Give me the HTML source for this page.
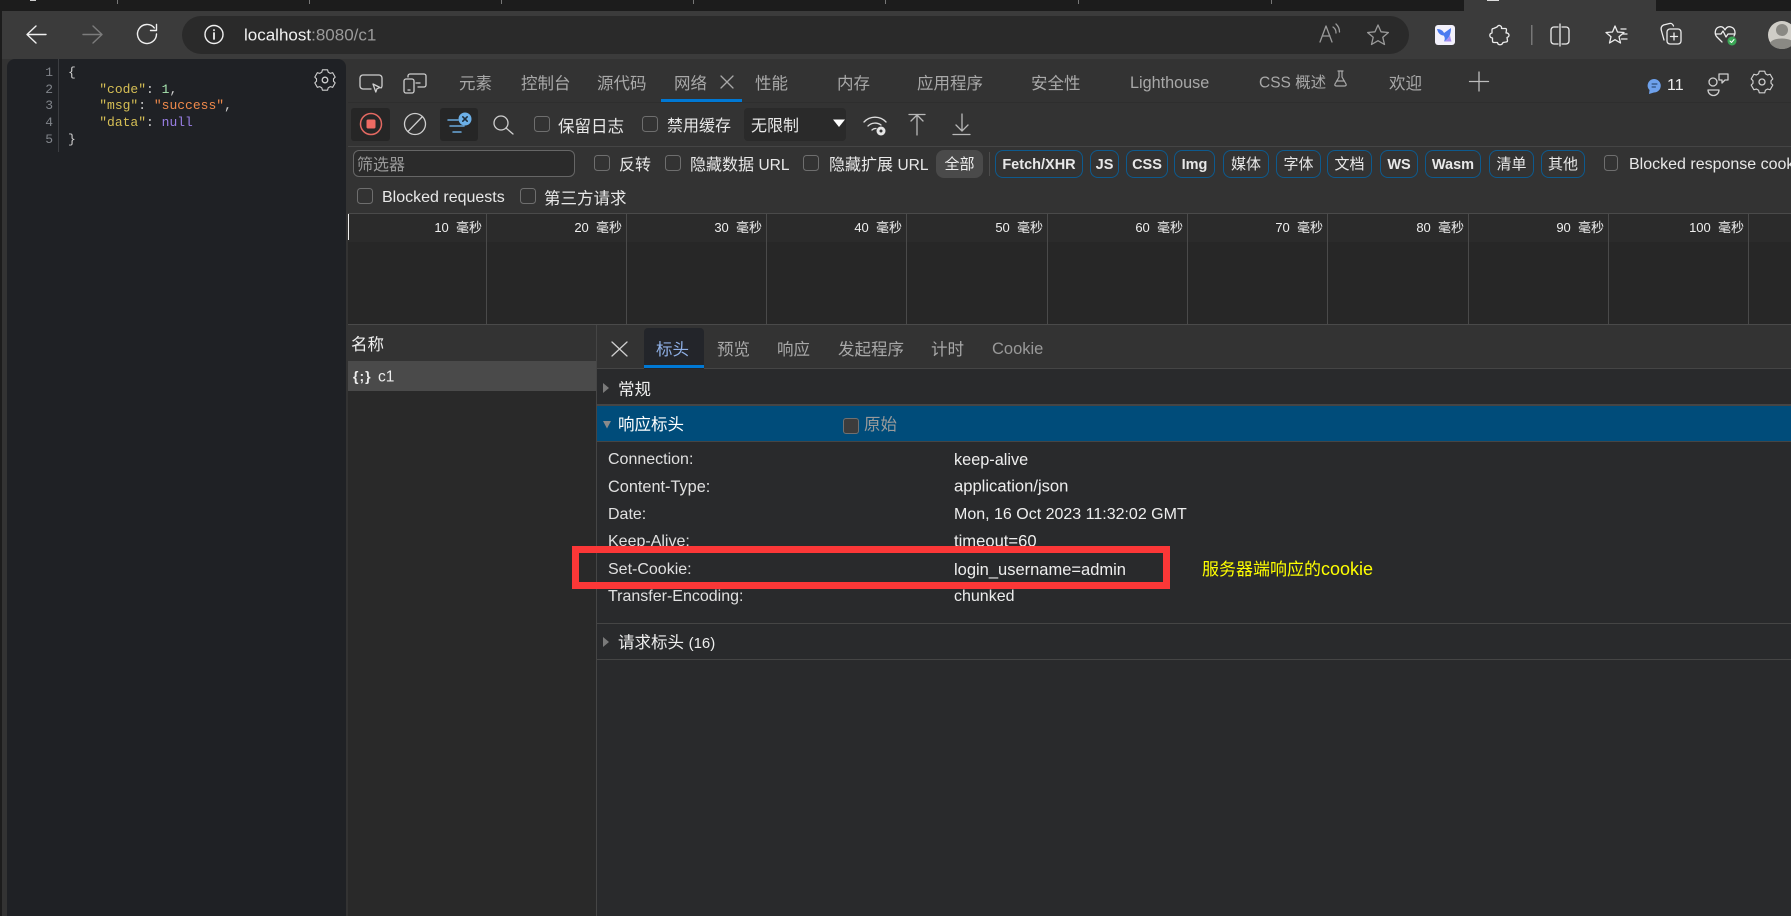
<!DOCTYPE html>
<html><head><meta charset="utf-8"><title>localhost:8080/c1</title>
<style>
html,body{margin:0;padding:0;width:1791px;height:916px;overflow:hidden;background:#3b3b3b}
body{position:relative;font-family:"Liberation Sans","Noto Sans CJK SC",sans-serif;font-size:15px;color:#e6e6e6}
.b{position:absolute}
.t{position:absolute;white-space:nowrap;transform:translateY(-50%);line-height:1}
.g{color:#a8a8a8;font-size:16.5px}
.w{color:#e8e8e8;font-size:16px}
.cb{position:absolute;width:13.5px;height:13.5px;border:1.5px solid #6e6e6e;border-radius:3.5px;background:#333;box-sizing:content-box}
.chip{position:absolute;top:150px;height:26px;border:1.5px solid #0d5a8e;border-radius:8px;text-align:center;line-height:28px;font-size:14.5px;font-weight:bold;color:#e8e8e8}
.cn{font-weight:normal;font-size:15px}
.tm{position:absolute;top:222px;width:90px;text-align:right;font-size:13px;line-height:14px;color:#eee;white-space:pre;transform:translateY(-1px)}
.v{position:absolute;width:1px;top:214px;height:110px;background:#4a4a4a}
.m{position:absolute;font-family:"Liberation Mono",monospace;font-size:13px;line-height:16.7px;white-space:pre}
.h{position:absolute;white-space:nowrap;transform:translateY(-50%);line-height:1;font-size:16px;color:#e0e0e0}
</style></head><body>
<!-- tab strip -->
<div class="b" style="left:0;top:0;width:1791px;height:11px;background:#1c1c1c"></div>
<div class="b" style="left:1464px;top:0;width:192px;height:11px;background:#3b3b3b"></div>
<div class="b" style="left:1456px;top:0;width:8px;height:11px;background:#1c1c1c;border-radius:0 0 8px 0"></div>
<div class="b" style="left:1487px;top:0;width:12px;height:1px;background:#ddd"></div>
<div class="b" style="left:117px;top:0;width:1px;height:4px;background:#777"></div>
<div class="b" style="left:309px;top:0;width:1px;height:4px;background:#777"></div>
<div class="b" style="left:501px;top:0;width:1px;height:4px;background:#777"></div>
<div class="b" style="left:693px;top:0;width:1px;height:4px;background:#777"></div>
<div class="b" style="left:885px;top:0;width:1px;height:4px;background:#777"></div>
<div class="b" style="left:1078px;top:0;width:1px;height:4px;background:#777"></div>
<div class="b" style="left:1271px;top:0;width:1px;height:4px;background:#777"></div>
<div class="b" style="left:30px;top:0;width:6px;height:1px;background:#ccc"></div>
<!-- address bar -->
<div class="b" style="left:182px;top:16px;width:1227px;height:38px;border-radius:19px;background:#2a2a2a"></div>
<span class="t" style="left:244px;top:35px;font-size:17px;color:#f0f0f0">localhost<span style="color:#9a9a9a">:8080/c1</span></span>
<!-- left panel -->
<div class="b" style="left:0;top:59px;width:348px;height:857px;background:#333"></div>
<div class="b" style="left:0;top:0;width:2px;height:916px;background:#1c1c1c"></div>
<div class="b" style="left:7px;top:59px;width:339px;height:857px;background:#1f2125;border-radius:8px 8px 0 0"></div>
<div class="b" style="left:58px;top:59px;width:1px;height:93px;background:#3c3e42"></div>
<div class="m" style="left:38px;top:65px;width:15px;text-align:right;color:#80848a">1
2
3
4
5</div>
<div class="m" style="left:68px;top:65px;color:#cfcfcf">{
    <span style="color:#d6bf55">"code"</span>: <span style="color:#a8e6b0">1</span>,
    <span style="color:#d6bf55">"msg"</span>: <span style="color:#f08a4b">"success"</span>,
    <span style="color:#d6bf55">"data"</span>: <span style="color:#9a7fe6">null</span>
}</div>
<!-- devtools -->
<div class="b" style="left:348px;top:59px;width:1443px;height:857px;background:#333"></div>
<div class="b" style="left:348px;top:102px;width:1443px;height:1px;background:#2e2e2e"></div>
<div class="b" style="left:661px;top:99px;width:81px;height:3px;background:#0078d4"></div>
<span class="t g" style="left:459px;top:84px">元素</span>
<span class="t g" style="left:521px;top:84px">控制台</span>
<span class="t g" style="left:597px;top:84px">源代码</span>
<span class="t g" style="left:674px;top:84px">网络</span>
<span class="t g" style="left:755px;top:84px">性能</span>
<span class="t g" style="left:837px;top:84px">内存</span>
<span class="t g" style="left:917px;top:84px">应用程序</span>
<span class="t g" style="left:1031px;top:84px">安全性</span>
<span class="t g" style="left:1130px;top:83px;font-size:16.2px">Lighthouse</span>
<span class="t g" style="left:1259px;top:83px;font-size:15.5px">CSS 概述</span>
<span class="t g" style="left:1389px;top:84px">欢迎</span>
<span class="t" style="left:1667px;top:86px;font-size:16px;color:#eee">11</span>
<!-- toolbar 2 -->
<div class="b" style="left:351px;top:108px;width:39px;height:33px;background:#262626;border-radius:3px"></div>
<div class="b" style="left:440px;top:108px;width:38px;height:33px;background:#262626;border-radius:3px"></div>
<div class="cb" style="left:534px;top:116px"></div>
<span class="t w" style="left:558px;top:127px;font-size:16.5px">保留日志</span>
<div class="cb" style="left:642px;top:116px"></div>
<span class="t w" style="left:667px;top:127px">禁用缓存</span>
<div class="b" style="left:744px;top:108px;width:102px;height:33px;background:#2a2a2a;border-radius:4px"></div>
<span class="t w" style="left:751px;top:127px">无限制</span>
<div class="b" style="left:348px;top:146px;width:1443px;height:1px;background:#454545"></div>
<!-- filter row -->
<div class="b" style="left:353px;top:150px;width:220px;height:25px;border:1px solid #666;border-radius:6px;background:#2b2b2b"></div>
<span class="t" style="left:357px;top:166px;font-size:16px;color:#999">筛选器</span>
<div class="cb" style="left:594px;top:155px"></div>
<span class="t w" style="left:619px;top:166px">反转</span>
<div class="cb" style="left:665px;top:155px"></div>
<span class="t w" style="left:690px;top:166px">隐藏数据 <span style="font-size:15.500px">URL</span></span>
<div class="cb" style="left:803px;top:155px"></div>
<span class="t w" style="left:829px;top:166px">隐藏扩展 <span style="font-size:15.500px">URL</span></span>
<div class="b" style="left:936px;top:150px;width:47px;height:28px;background:#4a4a4a;border-radius:8px;text-align:center;line-height:30px;font-size:15px;color:#eee">全部</div>
<div class="b" style="left:989px;top:152px;width:1px;height:24px;background:#4c4c4c"></div>
<div class="chip" style="left:995px;width:86px">Fetch/XHR</div>
<div class="chip" style="left:1090px;width:27px">JS</div>
<div class="chip" style="left:1126px;width:40px">CSS</div>
<div class="chip" style="left:1174px;width:39px">Img</div>
<div class="chip cn" style="left:1223px;width:44px">媒体</div>
<div class="chip cn" style="left:1276px;width:43px">字体</div>
<div class="chip cn" style="left:1327px;width:43px">文档</div>
<div class="chip" style="left:1380px;width:36px">WS</div>
<div class="chip" style="left:1425px;width:54px">Wasm</div>
<div class="chip cn" style="left:1489px;width:43px">清单</div>
<div class="chip cn" style="left:1541px;width:42px">其他</div>
<div class="cb" style="left:1604px;top:155px;width:12px"></div>
<span class="t w" style="left:1629px;top:165px">Blocked response cookies</span>
<div class="cb" style="left:357px;top:188px"></div>
<span class="t w" style="left:382px;top:198px">Blocked requests</span>
<div class="cb" style="left:520px;top:188px"></div>
<span class="t w" style="left:544px;top:199px;font-size:16.500px">第三方请求</span>
<!-- overview -->
<div class="b" style="left:348px;top:213px;width:1443px;height:111px;background:#272727"></div>
<div class="b" style="left:348px;top:214px;width:1443px;height:28px;background:#2b2b2b"></div>
<div class="b" style="left:348px;top:213px;width:1443px;height:1px;background:#4a4a4a"></div>
<div class="b" style="left:348px;top:214px;width:1px;height:26px;background:#eee"></div>
<div class="v" style="left:486px"></div><div class="v" style="left:626px"></div><div class="v" style="left:766px"></div><div class="v" style="left:906px"></div><div class="v" style="left:1047px"></div><div class="v" style="left:1187px"></div><div class="v" style="left:1327px"></div><div class="v" style="left:1468px"></div><div class="v" style="left:1608px"></div><div class="v" style="left:1748px"></div>
<div class="tm" style="left:392px">10  毫秒</div><div class="tm" style="left:532px">20  毫秒</div><div class="tm" style="left:672px">30  毫秒</div><div class="tm" style="left:812px">40  毫秒</div><div class="tm" style="left:953px">50  毫秒</div><div class="tm" style="left:1093px">60  毫秒</div><div class="tm" style="left:1233px">70  毫秒</div><div class="tm" style="left:1374px">80  毫秒</div><div class="tm" style="left:1514px">90  毫秒</div><div class="tm" style="left:1654px">100  毫秒</div>
<div class="b" style="left:348px;top:324px;width:1443px;height:1px;background:#4a4a4a"></div>
<!-- name column -->
<div class="b" style="left:348px;top:325px;width:248px;height:591px;background:#292929"></div>
<div class="b" style="left:348px;top:325px;width:248px;height:36px;background:#333"></div>
<div class="b" style="left:348px;top:361px;width:248px;height:30px;background:#4a4a4a"></div>
<div class="b" style="left:596px;top:325px;width:1px;height:591px;background:#454545"></div>
<span class="t" style="left:351px;top:345px;font-size:16.5px;color:#eee">名称</span>
<span class="t" style="left:353px;top:376px;font-size:14px;font-weight:bold;color:#eee;letter-spacing:1px">{;}</span>
<span class="t" style="left:378px;top:377px;font-size:15.500px;color:#eee">c1</span>
<!-- details -->
<div class="b" style="left:597px;top:325px;width:1194px;height:591px;background:#292a2c"></div>
<div class="b" style="left:597px;top:325px;width:1194px;height:44px;background:#333"></div>
<div class="b" style="left:597px;top:368px;width:1194px;height:1px;background:#454545"></div>
<div class="b" style="left:644px;top:328px;width:60px;height:41px;background:#23252a;border-radius:4px 4px 0 0"></div>
<div class="b" style="left:644px;top:365px;width:60px;height:3px;background:#0078d4"></div>
<span class="t" style="left:656px;top:350px;font-size:16.5px;color:#8fb0e6">标头</span>
<span class="t g" style="left:717px;top:350px">预览</span>
<span class="t g" style="left:777px;top:350px">响应</span>
<span class="t g" style="left:838px;top:350px">发起程序</span>
<span class="t g" style="left:931px;top:350px">计时</span>
<span class="t g" style="left:992px;top:349px;font-size:16.5px;color:#999">Cookie</span>
<span class="t" style="left:618px;top:390px;font-size:16.5px;color:#eee">常规</span>
<div class="b" style="left:597px;top:404px;width:1194px;height:2px;background:#454545"></div>
<div class="b" style="left:597px;top:406px;width:1194px;height:35px;background:#004c7a"></div>
<span class="t" style="left:618px;top:425px;font-size:16.5px;color:#fff">响应标头</span>
<div class="b" style="left:843px;top:418px;width:14px;height:14px;background:#3c3c3c;border:1.5px solid #707070;border-radius:3px"></div>
<span class="t" style="left:864px;top:425px;font-size:16.5px;color:#9a9a9a">原始</span>
<div class="b" style="left:597px;top:441px;width:1194px;height:1px;background:#454545"></div>
<span class="h" style="left:608px;top:460px">Connection:</span><span class="h" style="left:954px;top:460px;color:#eee;font-size:16.3px">keep-alive</span>
<span class="h" style="left:608px;top:487px;font-size:16.3px">Content-Type:</span><span class="h" style="left:954px;top:487px;color:#eee;font-size:16.6px">application/json</span>
<span class="h" style="left:608px;top:515px">Date:</span><span class="h" style="left:954px;top:515px;color:#eee">Mon, 16 Oct 2023 11:32:02 GMT</span>
<span class="h" style="left:608px;top:542px">Keep-Alive:</span><span class="h" style="left:954px;top:542px;color:#eee;font-size:16.6px">timeout=60</span>
<span class="h" style="left:608px;top:570px">Set-Cookie:</span><span class="h" style="left:954px;top:570px;color:#eee;font-size:16.5px">login_username=admin</span>
<span class="h" style="left:608px;top:597px">Transfer-Encoding:</span><span class="h" style="left:954px;top:597px;color:#eee">chunked</span>
<div class="b" style="left:597px;top:623px;width:1194px;height:1px;background:#454545"></div>
<span class="t" style="left:618px;top:643px;font-size:16.5px;color:#eee">请求标头 <span style="font-size:15px">(16)</span></span>
<div class="b" style="left:597px;top:659px;width:1194px;height:1px;background:#454545"></div>
<!-- annotation -->
<div class="b" style="left:572px;top:546px;width:598px;height:43px;box-sizing:border-box;border:7px solid #fb3737"></div>
<span class="t" style="left:1202px;top:569px;font-size:17px;color:#ffff00">服务器端响应的<span style="font-size:18px">cookie</span></span>
<!-- icons -->
<svg class="b" style="left:0;top:0" width="1791" height="916" viewBox="0 0 1791 916" fill="none" stroke-linecap="round" stroke-linejoin="round">
<defs><path id="gear" d="M-3-12h6l.8 2.8 2.4 1.4 2.8-.8 3 5.2-2 2v2.800l2 2-3 5.200-2.800-.8-2.400 1.400-.8 2.800h-6l-.8-2.800-2.400-1.400-2.800.8-3-5.200 2-2v-2.800l-2-2 3-5.200 2.800.8 2.400-1.400z"/></defs>
<!-- nav -->
<g stroke="#f0f0f0" stroke-width="1.400">
<path d="M28 34.500H46M36 26l-9 8.500 9 8.500"/>
<path d="M83 34.500H101M93 26l9 8.500-9 8.500" stroke="#7c7c7c"/>
<path d="M156.500 34a9.500 9.500 0 1 1-2.200-6.100"/><path d="M156.500 24.500v6h-6"/>
<circle cx="214" cy="34.500" r="9"/><path d="M214 33v6M214 30v.3" stroke-width="1.800"/>
</g>
<!-- read aloud, star -->
<g stroke="#9a9a9a" stroke-width="1.300">
<path d="M1320 42l6-16 6 16M1322.500 36h7.500M1333 27a7 7 0 0 1 3 6M1336 24a11 11 0 0 1 3.500 8"/>
<path d="M1378 25l3 6.800 7.400.7-5.600 4.800 1.700 7.200-6.500-3.800-6.500 3.800 1.700-7.200-5.600-4.800 7.400-.7z"/>
</g>
<!-- app -->
<rect x="1435" y="25" width="20" height="20" rx="3" fill="#f3f1fb"/>
<path d="M1437 29c3.500 0 6 1.500 7 4l7-5c0 6-2 11-7 13.500 1.500-3 .5-5-.5-6-3 0-5.500-2.500-6.500-6.500z" fill="#4b7bf0"/>
<path d="M1444 41.500c2.500-1 5-3.500 6-6.500 .5 3 1 5 1.500 6.500z" fill="#a68cf0"/>
<g stroke="#ececec" stroke-width="1.300">
<path d="M1497 27c2-3 5-1 4.500 1.500h4c1 0 1 1 1 1.500l-.5 3c3-.5 4.500 3.500 1 4.500l.5 3c0 1-.5 1.500-1.500 1.500l-3 .5c-1 3-5 3-5.500 0h-3.500c-1 0-1.500-.5-1.500-1.500v-3c-3.500-.5-3.500-4.500-.5-5v-3c0-1 .5-1.500 1.500-1.500z"/>
<path d="M1558 27h-4a3 3 0 0 0-3 3v11a3 3 0 0 0 3 3h4M1562 27h4a3 3 0 0 1 3 3v11a3 3 0 0 1-3 3h-4M1560 24v22"/>
<path d="M1615 26l2.500 6 6.500.500-5 4.200 1.500 6.300-5.500-3.300-5.500 3.300 1.500-6.300-5-4.200 6.500-.5zM1621 29h5M1623 34h4M1621.500 39h5.500"/>
<path d="M1664 40l-2.500-9c-1-3 0-5 2-6l6-1.500c2-.5 3.500 1 4 2.500"/><rect x="1667" y="29" width="14" height="15" rx="3"/><path d="M1674 33v7M1670.500 36.500h7"/>
<path d="M1722 42l-5-5c-3-3-2-9 2-10 3-1 5 1 6 3 1-2 3-4 6-3 4 1 5 6 3 9M1716 34h5l2-3 3 6 2-3h7"/>
</g>
<rect x="1531" y="25" width="1.500" height="20" fill="#777" stroke="none"/>
<circle cx="1732" cy="41" r="4.500" fill="#3aa655"/><path d="M1730 41l1.500 1.500 2.500-3" stroke="#fff" stroke-width="1"/>
<circle cx="1782" cy="35" r="14" fill="#cfcdc7"/><circle cx="1782" cy="30" r="6" fill="#8a8984"/><path d="M1770 43c3-6 21-6 24 0-5 8-19 8-24 0z" fill="#8a8984"/>
<!-- left gear, dt icons -->
<g stroke="#cfcfcf" stroke-width="1.300">
<g transform="translate(325 80) scale(.85)"><use href="#gear"/></g><circle cx="325" cy="80" r="2.800"/>
<path d="M371 89h-8a3 3 0 0 1-3-3v-8a3 3 0 0 1 3-3h16a3 3 0 0 1 3 3v8a3 3 0 0 1-1 2"/><path d="M373 84l7 3.500-3 1.200-1.200 3.300z"/>
<rect x="404" y="79" width="10" height="14" rx="2"/><path d="M408 77v-1a2 2 0 0 1 2-2h14a2 2 0 0 1 2 2v9a2 2 0 0 1-2 2h-6M416 83h4M408 90h2"/>
<path d="M721 76l12 12M733 76l-12 12" stroke="#a8a8a8"/>
<path d="M1479 72v19M1469.500 81.500h19" stroke="#bdbdbd"/>
<path d="M1338 71h5M1339 71v6l-4 7c-.5 1 0 2 1.500 2h8c1.500 0 2-1 1.500-2l-4-7v-6M1336.500 81h8" stroke="#a8a8a8" stroke-width="1.200"/>
<circle cx="1713" cy="82" r="4"/><path d="M1708 90h11a5.500 5.500 0 0 1-11 0zM1719 74h9v6h-3l-3 3v-3h-3z"/>
<g transform="translate(1762 82) scale(.9)"><use href="#gear"/></g><circle cx="1762" cy="82" r="3"/>
<circle cx="415" cy="124" r="10.500"/><path d="M408 131.500l14.500-15"/>
<circle cx="501" cy="123" r="7"/><path d="M506 128l7 6"/>
<path d="M909 114.500h16M917 115v20M911 121l6-6 6 6" stroke="#b8b8b8"/>
<path d="M953 134.500h17M962 114v17M956 125l6 6 6-6" stroke="#b8b8b8"/>
<path d="M864 122a15 15 0 0 1 22 0M868 126a10 10 0 0 1 13-1M872 130a5 5 0 0 1 4-1.500" stroke="#ddd"/>
<path d="M612 342l15 14M627 342l-15 14" stroke="#cfcfcf"/>
</g>
<circle cx="881" cy="131" r="4.500" fill="#e6e6e6"/><circle cx="881" cy="131" r="1.500" fill="#333"/>
<circle cx="371" cy="124" r="10.500" stroke="#e46962" stroke-width="1.500"/><rect x="366.500" y="119.500" width="9" height="9" rx="1.500" fill="#ee6b63"/>
<g stroke="#6aa8dc" stroke-width="1.500"><path d="M448 120h10M450 126h14M453 132h8"/></g>
<circle cx="465" cy="119" r="6.500" fill="#6cb0e8"/><path d="M462.800 116.800l4.400 4.400M467.200 116.800l-4.400 4.400" stroke="#1f2d3a" stroke-width="1.600"/>
<path d="M833 119.500h12l-6 7.500z" fill="#fff"/>
<path d="M1654 79a6.500 6.500 0 0 1 0 13.500l-5 1.500 .500-4a6.500 6.500 0 0 1 4.500-11z" fill="#6ea1ec"/><path d="M1652 84h5M1652 87h3.500" stroke="#1f3a60" stroke-width="1"/>
<path d="M603 383l6 5-6 5z" fill="#7a7a7a"/>
<path d="M603 421h8l-4 7.500z" fill="#8a8a8a"/>
<path d="M603 637l6 5-6 5z" fill="#7a7a7a"/>
</svg>
</body></html>
